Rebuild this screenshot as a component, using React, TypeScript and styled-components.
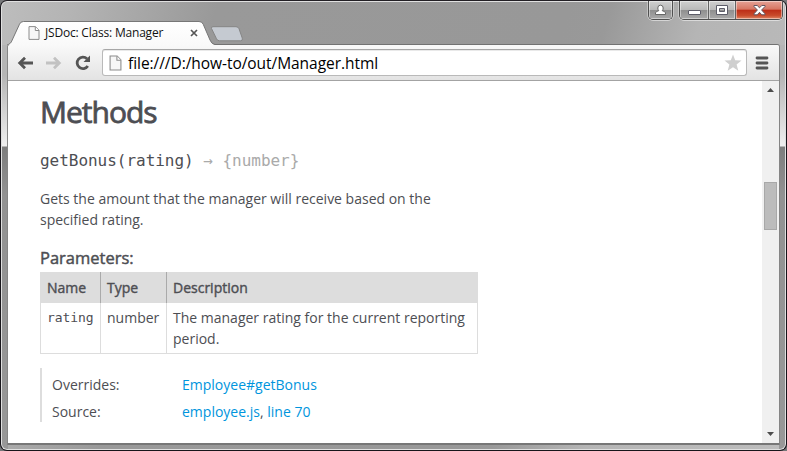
import React from "react";
import styled, { createGlobalStyle, css } from "styled-components";

const GlobalStyle = createGlobalStyle`
  * { box-sizing: border-box; }
  html, body { margin: 0; padding: 0; background: #77787a; overflow: hidden; }
`;

const Window = styled.div`
  width: 787px;
  height: 451px;
  border: 1px solid #17151a;
  border-top-color: #221f24;
  border-radius: 7px;
  overflow: hidden;
  padding: 0 6px 5px;
  display: flex;
  flex-direction: column;
  box-shadow: inset 0 0 0 1px #e0e0e0;
  background:
    linear-gradient(#b5b5b5, #b5b5b5 30px, #efefef 101px, #7d7d7d 102px, #929292 150px, #989898) left 0 top 44px / 7px 407px no-repeat,
    linear-gradient(#b5b5b5, #b5b5b5 30px, #efefef 101px, #7d7d7d 102px, #929292 150px, #989898) right 0 top 44px / 7px 407px no-repeat,
    linear-gradient(105deg, #bdbdbd 0, #b4b4b4 70px, #999 210px, #989898 550px, #999 590px, #b5b5b5 680px, #bdbdbd 100%);
  font-family: "Open Sans", "Noto Sans", sans-serif;
`;

const TitleBar = styled.header`
  height: 43px;
  flex: none;
  display: flex;
  justify-content: space-between;
  align-items: flex-end;
`;

const TabStrip = styled.div`
  display: flex;
  align-items: flex-end;
`;

const Tab = styled.div`
  position: relative;
  width: 208px;
  height: 25px;
  margin-bottom: -1px;
  padding: 1px 12px 0 21px;
  display: flex;
  align-items: center;
  z-index: 1;
`;

const TabShape = styled.svg`
  position: absolute;
  inset: 0;
`;

const TabTitle = styled.span`
  position: relative;
  width: 142px;
  margin-left: 5px;
  font-size: 12px;
  line-height: 18px;
  letter-spacing: -0.2px;
  color: #111;
  white-space: nowrap;
`;

const Glyph = styled.svg`
  position: relative;
  display: block;
  flex: none;
`;

const NewTab = styled.svg`
  display: block;
  margin: 0 0 2px -5px;
`;

const Controls = styled.div`
  display: flex;
  align-self: flex-start;
  gap: 6px;
  margin-right: -3px;
`;

const ControlGroup = styled.div`
  display: flex;
  height: 19px;
  border: 1px solid #505050;
  border-top: 0;
  border-radius: 0 0 5px 5px;
  overflow: hidden;
  box-shadow: 0 1px 0 rgba(255, 255, 255, 0.5), 1px 0 0 rgba(255, 255, 255, 0.35), -1px 0 0 rgba(255, 255, 255, 0.35);
`;

const ControlButton = styled.button<{ $width: number; $tone?: "close" }>`
  width: ${(p) => p.$width}px;
  padding: 0;
  border: 0;
  display: flex;
  justify-content: center;
  align-items: center;
  background: linear-gradient(#d0d0d0, #b9b9b9 48%, #8e8e8e 50%, #a9a9a9);
  box-shadow: inset 0 0 0 1px rgba(255, 255, 255, 0.45);
  & + & { border-left: 1px solid #636363; }
  ${(p) =>
    p.$tone === "close" &&
    css`
      background: linear-gradient(#e5a296, #d67562 46%, #bd2d17 50%, #c84a2b 80%, #e08765);
    `}
`;

const Client = styled.main`
  flex: 1;
  min-height: 0;
  display: flex;
  flex-direction: column;
  border: 1px solid #858585;
  border-top-color: #727272;
  border-bottom: 2px solid #777;
  border-radius: 3px 3px 1px 1px;
  background: #fff;
`;

const Toolbar = styled.div`
  height: 36px;
  flex: none;
  display: flex;
  align-items: center;
  padding: 0 10px 0 9px;
  border-bottom: 1px solid #a3a3a3;
  background: linear-gradient(#f9f9f9, #e3e3e3);
  border-radius: 3px 3px 0 0;
`;

const NavButtons = styled.nav`
  width: 85px;
  display: flex;
  gap: 13px;
  align-items: center;
`;

const AddressBar = styled.div`
  width: 645px;
  height: 27px;
  border: 1px solid #b9b9b9;
  border-top-color: #a6a6a6;
  border-radius: 3px;
  background: #fff;
  box-shadow: inset 0 1px 0 #e9e9e9;
  display: flex;
  align-items: center;
  padding: 0 4px 0 6px;
  margin-right: 8px;
`;

const Url = styled.span`
  flex: 1;
  margin-left: 6px;
  font-size: 15.5px;
  line-height: 24px;
  letter-spacing: -0.05px;
  color: #000;
  white-space: nowrap;
`;

const Viewport = styled.div`
  flex: 1;
  min-height: 0;
  display: flex;
`;

const Article = styled.article`
  flex: 1;
  padding: 9px 0 0 32px;
  color: #4d4e53;
  font-size: 14px;
  line-height: 21px;
`;

const Heading = styled.h2`
  margin: 0;
  font-size: 30px;
  line-height: 44px;
  font-weight: 400;
  letter-spacing: -1px;
  -webkit-text-stroke: 0.8px #4d4e53;
`;

const Signature = styled.h4`
  margin: 15px 0 0;
  font: 400 16px/24px "DejaVu Sans Mono", monospace;
  letter-spacing: -0.03px;
  white-space: pre;
`;

const ReturnType = styled.span`
  color: #aaa;
`;

const Description = styled.p`
  margin: 15px 0 0;
  width: 438px;
`;

const SubHeading = styled.h5`
  margin: 17px 0 0;
  font-size: 16.5px;
  line-height: 21px;
  font-weight: 400;
  -webkit-text-stroke: 0.45px #4d4e53;
`;

const Table = styled.table`
  margin-top: 4px;
  width: 438px;
  table-layout: fixed;
  border-spacing: 0;
  border-collapse: separate;
`;

const Th = styled.th<{ $width: number }>`
  width: ${(p) => p.$width}px;
  height: 31px;
  padding: 0 6px 1px;
  background: #ddd;
  border-right: 1px solid #aaa;
  text-align: left;
  font-weight: 400;
  -webkit-text-stroke: 0.4px #4d4e53;
  &:first-child { padding-left: 7px; }
  &:last-child { border-right-color: #ddd; }
`;

const Td = styled.td<{ $code?: boolean }>`
  height: 51px;
  padding: 4px 6px;
  border: solid #ddd;
  border-width: 0 1px 1px 0;
  vertical-align: top;
  &:first-child { border-left-width: 1px; }
  ${(p) =>
    p.$code &&
    css`
      font-family: "DejaVu Sans Mono", monospace;
      font-size: 13px;
      letter-spacing: -0.1px;
    `}
`;

const Details = styled.dl`
  margin: 14px 0 0;
  height: 54px;
  border-left: 2px solid #ddd;
  padding-left: 10px;
  display: grid;
  grid-template-columns: 130px 1fr;
  grid-auto-rows: 27px;
  line-height: 33px;
`;

const Term = styled.dt``;

const Value = styled.dd`
  margin: 0;
`;

const Link = styled.a`
  color: #0095dd;
  text-decoration: none;
`;

const Scrollbar = styled.aside`
  width: 17px;
  background: #f0f0f0;
  padding: 7px 2px 7px 1px;
  display: flex;
  flex-direction: column;
  align-items: center;
`;

const Thumb = styled.div`
  width: 13px;
  height: 48px;
  margin: 90px 0 auto;
  flex: none;
  background: #bcbcbc;
  border: 1px solid #a8a8a8;
`;

const PageIcon = ({ width, height }: { width: number; height: number }) => (
  <Glyph width={width} height={height} viewBox="0 0 12 14">
    <path d="M1 .6h6.5L11 4.2v9.2H1z" fill="#f7f7f7" stroke="#8c8c8c" />
    <path d="M7.3.8v3.7H11" fill="#fff" stroke="#8c8c8c" />
  </Glyph>
);

const Arrow = ({ forward }: { forward?: boolean }) => (
  <Glyph width="16" height="14" viewBox="0 0 16 14">
    <path
      d={forward ? "M0 7h12.5M8 1.7 13.3 7 8 12.3" : "M16 7H3.5M8 1.7 2.7 7 8 12.3"}
      fill="none"
      stroke={forward ? "#c2c2c2" : "#555"}
      strokeWidth="2.8"
    />
  </Glyph>
);

export default function App() {
  return (
    <>
      <GlobalStyle />
      <Window>
        <TitleBar>
          <TabStrip>
            <Tab>
              <TabShape width="208" height="25" viewBox="0 0 208 25">
                <defs>
                  <linearGradient id="tab" x2="0" y2="1">
                    <stop stopColor="#fff" />
                    <stop offset="1" stopColor="#f9f9f9" />
                  </linearGradient>
                </defs>
                <path
                  d="M0 25C3 24 4 23 5.2 20L12.5 4.2Q13.5 1.5 16.5 1.5H192q3 0 4.2 2.7L203 20q1.5 4 5 5z"
                  fill="url(#tab)"
                />
                <path
                  d="M0 25C3 24 4 23 5.2 20L12.5 4.2Q13.5 1.5 16.5 1.5H192q3 0 4.2 2.7L203 20q1.5 4 5 4.5"
                  fill="none"
                  stroke="#777"
                />
              </TabShape>
              <PageIcon width={12} height={14} />
              <TabTitle>JSDoc: Class: Manager</TabTitle>
              <Glyph width="14" height="12" viewBox="0 0 14 12">
                <path d="m4 3 6 6m0-6-6 6" stroke="#555" strokeWidth="1.7" />
              </Glyph>
            </Tab>
            <NewTab width="33" height="16" viewBox="0 0 33 16">
              <path
                d="M3 .7h23q2 0 3 2l3.3 9.5q.8 2.6-1.8 2.6H9.5q-2 0-3-2L1.5 2.5Q1 .7 3 .7z"
                fill="#c5cad1"
                stroke="#858585"
              />
            </NewTab>
          </TabStrip>
          <Controls>
            <ControlGroup>
              <ControlButton $width={23} aria-label="Profile">
                <Glyph width="11" height="12" viewBox="0 0 11 12">
                  <path
                    d="M.5 10.5V8.9Q1 7.2 3.8 6.7 2.8 5.6 2.8 4q0-2.8 2.7-2.8T8.2 4q0 1.6-1 2.7 2.8.5 3.3 2.2v1.6z"
                    fill="#fff"
                    stroke="#666"
                  />
                </Glyph>
              </ControlButton>
            </ControlGroup>
            <ControlGroup>
              <ControlButton $width={28} aria-label="Minimize">
                <Glyph width="13" height="12" viewBox="0 0 13 12">
                  <rect x=".5" y="6.5" width="12" height="4" rx=".5" fill="#fff" stroke="#5c5c68" />
                </Glyph>
              </ControlButton>
              <ControlButton $width={27} aria-label="Maximize">
                <Glyph width="12" height="11" viewBox="0 0 12 11">
                  <path
                    d="M.5.5h11v9H.5zM3.5 3.5v3h5v-3z"
                    fill="#fff"
                    fillRule="evenodd"
                    stroke="#5c5c68"
                  />
                </Glyph>
              </ControlButton>
              <ControlButton $width={47} $tone="close" aria-label="Close">
                <Glyph width="13" height="11" viewBox="0 0 13 11">
                  <path
                    d="M1 .5h3.2l2.3 2.3L8.8.5H12v1L8.6 5 12 8.8v1H8.8L6.5 7.3 4.2 9.8H1v-1L4.4 5 1 1.5z"
                    fill="#fff"
                    stroke="#625660"
                  />
                </Glyph>
              </ControlButton>
            </ControlGroup>
          </Controls>
        </TitleBar>
        <Client>
          <Toolbar>
            <NavButtons>
              <Arrow />
              <Arrow forward />
              <Glyph width="16" height="16" viewBox="0 0 16 16">
                <path d="M12.8 11A5.8 5.8 0 1 1 12 3.7" fill="none" stroke="#555" strokeWidth="2.8" />
                <path d="M15 .5V7H8.5z" fill="#555" />
              </Glyph>
            </NavButtons>
            <AddressBar>
              <PageIcon width={13} height={16} />
              <Url>file:///D:/how-to/out/Manager.html</Url>
              <Glyph width="18" height="18" viewBox="0 0 18 18">
                <path
                  d="m9 .5 2.2 5.8 6.3.3-4.9 4 1.7 6.2L9 13.3l-5.3 3.5 1.7-6.2-4.9-4 6.3-.3z"
                  fill="#cfcfcf"
                />
              </Glyph>
            </AddressBar>
            <Glyph width="14" height="14" viewBox="0 0 14 14">
              <path d="M2 2h10M2 7h10M2 12h10" stroke="#555" strokeWidth="2.8" strokeLinecap="round" />
            </Glyph>
          </Toolbar>
          <Viewport>
            <Article>
              <Heading>Methods</Heading>
              <Signature>
                getBonus(rating)<ReturnType> → {"{number}"}</ReturnType>
              </Signature>
              <Description>
                Gets the amount that the manager will receive based on the
                <br />
                specified rating.
              </Description>
              <SubHeading>Parameters:</SubHeading>
              <Table>
                <thead>
                  <tr>
                    <Th $width={61}>Name</Th>
                    <Th $width={66}>Type</Th>
                    <Th $width={311}>Description</Th>
                  </tr>
                </thead>
                <tbody>
                  <tr>
                    <Td $code>rating</Td>
                    <Td>number</Td>
                    <Td>The manager rating for the current reporting period.</Td>
                  </tr>
                </tbody>
              </Table>
              <Details>
                <Term>Overrides:</Term>
                <Value>
                  <Link>Employee#getBonus</Link>
                </Value>
                <Term>Source:</Term>
                <Value>
                  <Link>employee.js</Link>, <Link>line 70</Link>
                </Value>
              </Details>
            </Article>
            <Scrollbar>
              <Glyph width="7" height="4" viewBox="0 0 7 4">
                <path d="M0 4 3.5 0 7 4z" fill="#4d4d4d" />
              </Glyph>
              <Thumb />
              <Glyph width="7" height="4" viewBox="0 0 7 4">
                <path d="m0 0 3.5 4L7 0z" fill="#4d4d4d" />
              </Glyph>
            </Scrollbar>
          </Viewport>
        </Client>
      </Window>
    </>
  );
}
